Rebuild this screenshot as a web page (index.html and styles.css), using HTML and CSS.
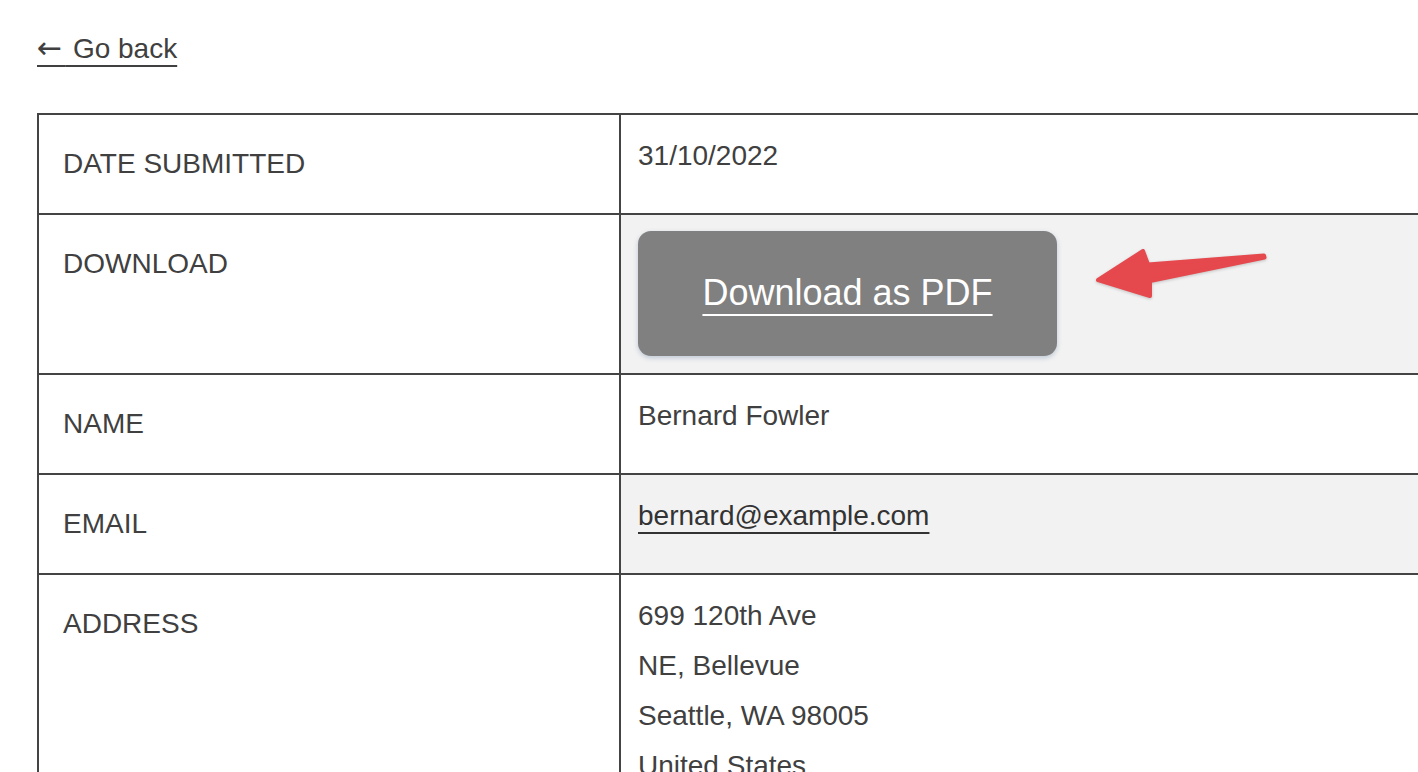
FILE: index.html
```html
<!DOCTYPE html>
<html lang="en">
<head>
<meta charset="utf-8">
<title>Submission</title>
<link rel="stylesheet" href="styles.css">
</head>
<body>
<div class="page">
  <p class="back-row"><a class="back-link" href="#"><span class="back-arrow">←</span> Go back</a></p>
  <table class="details">
    <colgroup>
      <col class="col-label">
      <col class="col-value">
    </colgroup>
    <tbody>
      <tr>
        <th>DATE SUBMITTED</th>
        <td>31/10/2022</td>
      </tr>
      <tr class="alt">
        <th>DOWNLOAD</th>
        <td><a class="pdf-btn" href="#"><span class="pdf-btn-text">Download as PDF</span></a></td>
      </tr>
      <tr>
        <th>NAME</th>
        <td>Bernard Fowler</td>
      </tr>
      <tr class="alt">
        <th>EMAIL</th>
        <td><a class="mail-link" href="#">bernard@example.com</a></td>
      </tr>
      <tr>
        <th>ADDRESS</th>
        <td>699 120th Ave<br>NE, Bellevue<br>Seattle, WA 98005<br>United States</td>
      </tr>
    </tbody>
  </table>
  <svg class="annot-arrow" viewBox="1080 235 200 75" width="200" height="75" aria-hidden="true">
    <polygon points="1098,280 1143,251 1148,264.5 1264,255.5 1264.5,257.5 1150,281 1150,296" fill="#e5484d" stroke="#e5484d" stroke-width="4" stroke-linejoin="round"/>
  </svg>
</div>
</body>
</html>
```

FILE: styles.css
```css
html, body {
  margin: 0;
  padding: 0;
  overflow: hidden;
  background: #ffffff;
}

body {
  font-family: "Liberation Sans", Arial, Helvetica, sans-serif;
  font-size: 28px;
  color: #404040;
}

.page {
  position: relative;
  padding: 23px 0 0 37px;
}

.back-row {
  margin: 0 0 39px 0;
  line-height: 50px;
}

.back-link {
  color: #404040;
  text-decoration: underline;
  text-decoration-thickness: 2px;
  text-underline-offset: 0.24em;
}

.back-arrow {
  font-family: "DejaVu Sans", sans-serif;
  font-size: 30px;
  letter-spacing: 3px;
}

.details {
  border-collapse: collapse;
  table-layout: fixed;
  width: 1440px;
  border: 2px solid #444444;
}

.col-label {
  width: 582px;
}

.details th,
.details td {
  border: 2px solid #444444;
  vertical-align: top;
  text-align: left;
  line-height: 50px;
  font-weight: normal;
}

.details th {
  padding: 24px 24px;
}

.details td {
  padding: 16px 17px 14px 17px;
}

.details tr.alt td {
  background: #f2f2f2;
}

.pdf-btn {
  display: block;
  box-sizing: border-box;
  width: 419px;
  height: 125px;
  margin: 0 0 3px 0;
  padding-top: 35px;
  border-radius: 13px;
  background: #808080;
  box-shadow: 0 2px 5px rgba(40, 80, 130, 0.25);
  text-align: center;
  text-decoration: none;
  line-height: 54px;
  font-size: 36px;
  color: #ffffff;
}

.pdf-btn-text {
  text-decoration: underline;
  text-decoration-thickness: 2px;
  text-underline-offset: 0.26em;
}

.mail-link {
  color: #333333;
  text-decoration: underline;
  text-decoration-thickness: 2px;
  text-underline-offset: 0.24em;
}

.annot-arrow {
  position: absolute;
  left: 1080px;
  top: 235px;
  filter: drop-shadow(0 1px 1.5px rgba(0, 0, 0, 0.2));
}
```
